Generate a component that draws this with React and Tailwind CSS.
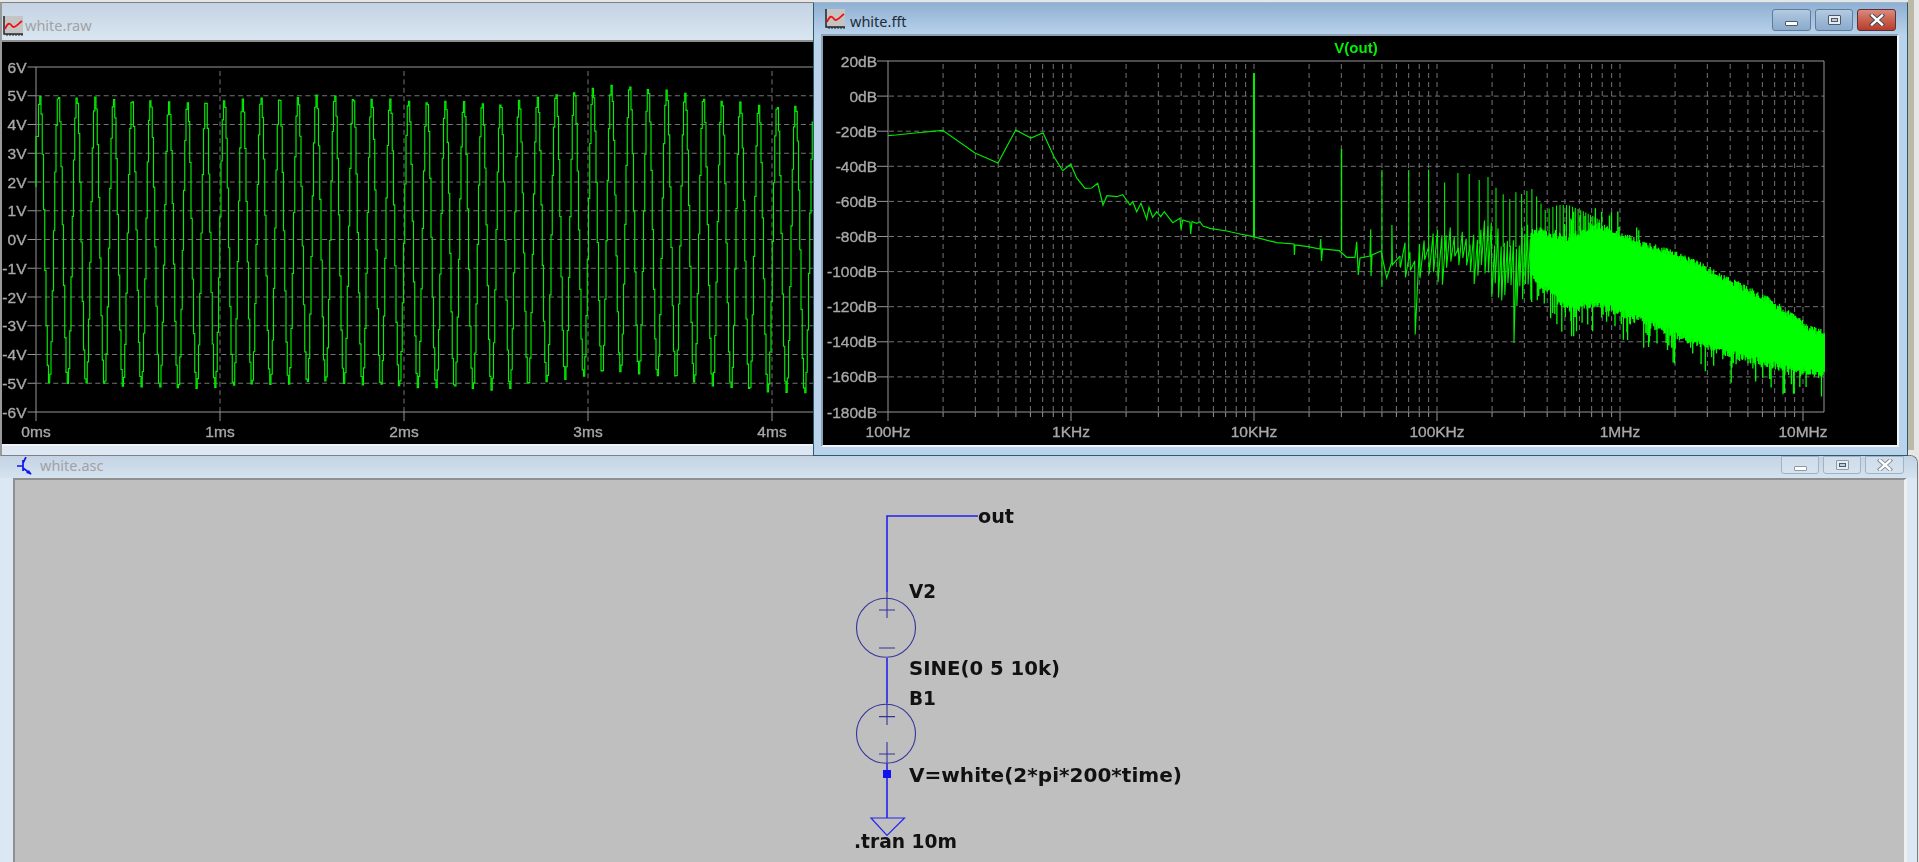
import React from 'react';

// seeded so every render gives the same noise
let seed = 12345;
const rand = () => {
  seed = (seed * 1664525 + 1013904223) % 4294967296;
  return seed / 4294967296;
};

const interp = (pts, x) => {
  if (x <= pts[0][0]) return pts[0][1];
  for (let i = 1; i < pts.length; i++) {
    if (x <= pts[i][0]) {
      const [x0, y0] = pts[i - 1];
      const [x1, y1] = pts[i];
      return y0 + ((y1 - y0) * (x - x0)) / (x1 - x0);
    }
  }
  return pts[pts.length - 1][1];
};

const GRAY = '#a8a8a8';
const GRID = '#747474';
const FRAME = '#969696';
const LABEL_FONT = "'Liberation Sans', Arial, sans-serif";

// time domain trace: 10kHz sine plus a slow wander from the white source
const peakY = [
  [39, 96], [58, 95], [77, 97], [95, 97], [113, 99], [132, 99], [150, 100], [169, 102], [187, 102],
  [205, 100], [224, 100], [242, 99], [261, 97], [279, 97], [298, 97], [316, 95], [335, 95], [353, 97],
  [372, 99], [390, 99], [410, 100], [450, 101], [500, 103], [518, 100], [537, 97], [555, 93], [573, 91],
  [592, 88], [610, 85], [629, 85], [647, 88], [666, 90], [684, 93], [702, 97], [721, 100], [739, 102],
  [758, 105], [776, 105], [795, 105], [813, 108],
];

const buildRawPath = () => {
  let d = '';
  const step = 1.25;
  for (let x = 35.5; x < 815; x += step) {
    const off = (95.75 - interp(peakY, x)) / 28.75;
    const v = 5 * Math.sin((2 * Math.PI * (x - 34.4)) / 18.43) + off;
    const y = 239.5 - v * 28.75;
    d += x === 35.5 ? `M${x} ${y.toFixed(1)}` : `V${y.toFixed(1)}H${(x + step).toFixed(2)}`;
  }
  return d;
};

// spectrum, low part read off the plot by hand
const lowTrace = [
  [888, 135.6], [896, 135], [915, 133], [942.7, 130.3], [975, 153], [998, 163], [1015.7, 130], [1031, 138],
  [1043, 132.7], [1054, 156.7], [1062.7, 170.7], [1070.7, 164.3], [1076.7, 178], [1085, 188.3], [1091.7, 188],
  [1097.7, 183.3], [1103, 205], [1107, 195.7], [1116.7, 196.7], [1122.7, 194.7], [1130, 205], [1132.7, 201.7],
  [1136.7, 211.7], [1141, 203.3], [1146.7, 219.3], [1149, 207.3], [1152.7, 217.3], [1156.7, 211.7],
  [1160.7, 216.7], [1164.3, 211.7], [1172.7, 222.7], [1180, 218.3], [1181, 229.3], [1182.7, 220], [1190, 222.3],
  [1190.7, 234], [1192, 221.5], [1196.7, 223.3], [1200, 222], [1203, 226], [1210, 228.3], [1226.7, 231],
  [1240, 234], [1253.3, 236.7], [1276.7, 242.7], [1294, 244], [1294.4, 255], [1295, 245], [1308, 246.7],
  [1320, 249], [1320.7, 239], [1321.5, 261], [1322.5, 249], [1339.3, 250.7], [1346.7, 257.3], [1355, 257.3],
  [1356.7, 241.7], [1358.3, 275], [1360, 258], [1370, 256], [1370.7, 229.3], [1371, 276], [1372, 255],
  [1381, 251], [1386.7, 278], [1391.7, 262], [1391.9, 225], [1392.4, 265], [1400, 256],
];
const toPath = (pts) => pts.map(([x, y], i) => `${i ? 'L' : 'M'}${x} ${y}`).join('');

const bandTop = [[1400, 250], [1407, 235], [1433, 225], [1460, 228], [1487, 215], [1500, 222], [1531, 222]];
const bandBot = [[1400, 285], [1407, 295], [1433, 285], [1460, 285], [1487, 295], [1500, 312], [1531, 306]];
const denseTop = [[1531, 226], [1567, 234], [1600, 222], [1633, 236], [1667, 248], [1693, 258], [1730, 277], [1770, 297], [1810, 325], [1824, 329]];
const denseBot = [[1531, 282], [1567, 312], [1600, 310], [1633, 322], [1667, 335], [1700, 349], [1733, 359], [1767, 369], [1810, 376], [1824, 380]];
const harmonicTop = [[1341, 149], [1382, 170], [1408, 170], [1428, 169], [1444, 183], [1458, 173], [1469, 174], [1479, 180], [1488, 177], [1495, 187], [1502, 193], [1509, 200], [1515, 192], [1522, 194], [1527, 191], [1532, 189], [1545, 210], [1558, 205], [1568, 205], [1585, 212], [1600, 220]];

// thin zigzag, getting denser until it merges into the solid part
const buildBand = () => {
  let d = 'M1400 256';
  let x = 1400;
  while (x < 1531) {
    const deep = rand() < 0.25 ? rand() * 60 : 0;
    const top = interp(bandTop, x) + rand() * 30;
    const bot = interp(bandBot, x) - rand() * 30 + deep;
    d += `L${x.toFixed(1)} ${top.toFixed(1)}L${(x + 0.5).toFixed(1)} ${bot.toFixed(1)}`;
    x += 5 - (x - 1400) / 55;
  }
  return d;
};

const buildDense = () => {
  let d = '';
  for (let x = 1531; x < 1825; x += 0.7) {
    const t = interp(denseTop, x) + rand() * 8 - (rand() < 0.1 && x < 1640 ? rand() * 22 : 0);
    const deep = rand() < 0.2 ? rand() * 30 : 0;
    const b = interp(denseBot, x) - rand() * 9 + deep;
    d += `M${x.toFixed(1)} ${t.toFixed(1)}V${b.toFixed(1)}`;
  }
  return d;
};

const buildHarmonics = () => {
  let d = '';
  for (let n = 5; n < 90; n += 2) {
    const x = 888 + 183 * (2 + Math.log10(n));
    if (x > 1600) break;
    const base = interp(x < 1400 ? [[1380, 262], [1400, 262]] : bandTop, x) + 25;
    d += `M${x.toFixed(1)} ${interp(harmonicTop, x).toFixed(1)}V${base.toFixed(1)}`;
  }
  return d;
};

const rawPath = buildRawPath();
const bandPath = buildBand();
const densePath = buildDense();
const harmonicPath = buildHarmonics();

const voltTicks = [6, 5, 4, 3, 2, 1, 0, -1, -2, -3, -4, -5, -6];
const msTicks = [0, 1, 2, 3, 4];
const dbTicks = [20, 0, -20, -40, -60, -80, -100, -120, -140, -160, -180];
const freqLabels = ['100Hz', '1KHz', '10KHz', '100KHz', '1MHz', '10MHz'];

const AxisText = ({ children, ...rest }) => (
  <text fontSize="15.5" fontFamily={LABEL_FONT} fill={GRAY} stroke={GRAY} strokeWidth="0.35" {...rest}>{children}</text>
);

const TimePlot = () => (
  <svg viewBox="3 42 810 402" className="block w-full h-full blur-[0.35px]">
    {voltTicks.map((v) => {
      const y = 67 + (6 - v) * 28.75;
      return (
        <g key={v}>
          <line x1="27" x2="35.5" y1={y} y2={y} stroke={FRAME} />
          {Math.abs(v) < 6 && <line x1="36" x2="813" y1={y} y2={y} stroke={GRID} strokeDasharray="5 3.4" />}
          <AxisText x="26" y={y + 5.5} textAnchor="end">{v}V</AxisText>
        </g>
      );
    })}
    {msTicks.map((m) => {
      const x = 35.5 + m * 184;
      return (
        <g key={m}>
          {m > 0 && <line x1={x} x2={x} y1="71" y2="412" stroke={GRID} strokeDasharray="5 3.4" />}
          <line x1={x} x2={x} y1="412" y2="421" stroke={FRAME} />
          <AxisText x={x} y="437" textAnchor="middle">{m}ms</AxisText>
        </g>
      );
    })}
    <path d="M813 67H35.5V412H813" fill="none" stroke={FRAME} />
    <path d={rawPath} fill="none" stroke="#00f000" strokeWidth="1.15" />
  </svg>
);

const FftPlot = () => {
  const verticals = [];
  for (let dec = 0; dec < 6; dec++) {
    for (let k = 1; k < 10; k++) {
      const x = 888 + 183 * (dec + Math.log10(k));
      if (x > 1824) break;
      if (dec === 0 && k === 1) continue;
      verticals.push([x, k === 1]);
    }
  }
  return (
    <svg viewBox="823 36 1074 409" className="block w-full h-full blur-[0.35px]">
      <text x="1356" y="53" textAnchor="middle" fontSize="15" fontWeight="700" fontFamily={LABEL_FONT} fill="#00f000">V(out)</text>
      {dbTicks.map((db, i) => {
        const y = 61 + i * 35.1;
        return (
          <g key={db}>
            <line x1="877" x2="888" y1={y} y2={y} stroke={FRAME} />
            {i > 0 && i < 10 && <line x1="889" x2="1824" y1={y} y2={y} stroke={GRID} strokeDasharray="5 3.4" />}
            <AxisText x="877" y={y + 5.5} textAnchor="end">{db}dB</AxisText>
          </g>
        );
      })}
      {verticals.map(([x, major], i) => (
        <g key={i}>
          <line x1={x} x2={x} y1="64" y2="412" stroke={GRID} strokeDasharray="5 4" />
          <line x1={x} x2={x} y1="412" y2={major ? 421 : 417} stroke={FRAME} />
        </g>
      ))}
      <line x1="888" x2="888" y1="412" y2="421" stroke={FRAME} />
      {freqLabels.map((label, i) => (
        <AxisText key={label} x={888 + i * 183} y="437" textAnchor="middle">{label}</AxisText>
      ))}
      <path d="M888 412V61H1824V412H888" fill="none" stroke={FRAME} />
      <path d={toPath(lowTrace)} fill="none" stroke="#00e800" strokeWidth="1.2" />
      <path d="M1254 237V73" stroke="#00f000" strokeWidth="2" />
      <path d="M1341.5 251V149" stroke="#00f000" strokeWidth="1.4" />
      <path d={harmonicPath} stroke="#00f000" strokeWidth="1.1" fill="none" />
      <path d={bandPath} stroke="#00f000" strokeWidth="1.1" fill="none" />
      <path d={densePath} stroke="#00ff00" strokeWidth="1.3" fill="none" />
    </svg>
  );
};

const SCHEM_FONT = "'DejaVu Sans', Verdana, sans-serif";
const labels = [
  ['out', 978, 523, 36],
  ['V2', 909, 598, 27],
  ['SINE(0 5 10k)', 909, 675, 151],
  ['B1', 909, 705, 27],
  ['V=white(2*pi*200*time)', 909, 782, 273],
  ['.tran 10m', 854, 848, 103],
];

const Schematic = () => (
  <svg viewBox="15 480 1889 382" className="block w-full h-full blur-[0.3px]">
    <g fill="none" stroke="#2222ee" strokeWidth="1.6">
      <path d="M978 516H887V592" />
      <path d="M887 658V703" />
      <path d="M887 764V818" />
    </g>
    <g fill="none" stroke="#33339c" strokeWidth="1.1">
      <circle cx="886" cy="627.7" r="29.5" />
      <circle cx="886" cy="733.7" r="29.5" />
      <path d="M887 592V618M879 610H895M879 648H895" />
      <path d="M887 703V725M879 716.6H895M887 742V764M879 754H895" />
    </g>
    <rect x="883" y="770" width="8" height="8" fill="#1010f0" />
    <path d="M871 818H904.5L887 835.5Z" fill="none" stroke="#2626f0" strokeWidth="1.2" />
    {labels.map(([text, x, y, w]) => (
      <text key={text} x={x} y={y} textLength={w} lengthAdjust="spacingAndGlyphs" fontSize="19.5" fontWeight="700" fontFamily={SCHEM_FONT} fill="#111111">{text}</text>
    ))}
  </svg>
);

const PlotIcon = () => (
  <svg viewBox="0 0 20 20" className="w-5 h-5 shrink-0">
    <rect x="1" y="0" width="19" height="17" fill="#c4c4c4" />
    <path d="M1 0V18H20" fill="none" stroke="#222" strokeWidth="1.5" />
    <path d="M4 18V20M7 18V20M10 18V20M13 18V20M16 18V20M19 18V20" stroke="#222" />
    <path d="M2 13C5 6 7 7 9 10C11 13 14 9 19 5" fill="none" stroke="#f01010" strokeWidth="1.8" />
  </svg>
);

const SchematicIcon = () => (
  <svg viewBox="0 0 15 18" className="w-[15px] h-[18px] shrink-0 mt-[1px]">
    <path d="M0 9H6M6 3V14M6 6L9 0M6 11L14 17" fill="none" stroke="#1414f0" strokeWidth="1.7" />
    <path d="M14.5 17.5L9 16L12 13Z" fill="#1414f0" />
  </svg>
);

const Glyph = ({ kind, dim }) => {
  const line = dim ? '#7f8a96' : '#3c4652';
  if (kind === 'min') {
    return <div className={`w-[13px] h-[5px] mt-[6px] rounded-[1px] border bg-white ${dim ? 'border-[#8f99a3]' : 'border-[#4d5966]'}`} />;
  }
  if (kind === 'max') {
    return (
      <div className={`w-[13px] h-[10px] rounded-[1px] border flex items-center justify-center bg-[#e6ecf2] ${dim ? 'border-[#8f99a3]' : 'border-[#4d5966]'}`}>
        <div className="w-[7px] h-[4px] border border-[#4d5966] bg-[#b9cde0]" />
      </div>
    );
  }
  return (
    <svg viewBox="0 0 16 12" className="w-4 h-3">
      <path d="M3 1.5L13 10.5M13 1.5L3 10.5" stroke={line} strokeWidth="4.2" strokeLinecap="square" />
      <path d="M3 1.5L13 10.5M13 1.5L3 10.5" stroke="#fff" strokeWidth="2.4" strokeLinecap="square" />
    </svg>
  );
};

const WinButton = ({ kind, dim, className }) => {
  const tone = dim
    ? 'bg-gradient-to-b from-[#cfdcea] to-[#d5e2ef] border-[#a3b2c2]'
    : kind === 'close'
      ? 'bg-gradient-to-b from-[#d9897e] via-[#c9604f] to-[#b83c2c] border-[#5c3038]'
      : 'bg-gradient-to-b from-[#b4cbe2] via-[#9db9d6] to-[#8aabcd] border-[#5e7b99]';
  return (
    <div className={`flex items-center justify-center border rounded-[3px] ${tone} ${className}`}>
      <Glyph kind={kind} dim={dim} />
    </div>
  );
};

const Buttons = ({ dim }) => (
  <div className="ml-auto flex gap-[4px]">
    <WinButton kind="min" dim={dim} className={dim ? 'w-[38px] h-[18px] rounded-t-none' : 'w-[39px] h-[22px]'} />
    <WinButton kind="max" dim={dim} className={dim ? 'w-[38px] h-[18px] rounded-t-none' : 'w-[38px] h-[22px]'} />
    <WinButton kind="close" dim={dim} className={dim ? 'w-[39px] h-[18px] rounded-t-none' : 'w-[39px] h-[22px]'} />
  </div>
);

export default function App() {
  return (
    <div className="relative w-[1919px] h-[862px] overflow-hidden bg-[#e6e6e6] font-['Noto_Sans',sans-serif]">
      {/* bit of the desktop left showing on the far right */}
      <div className="absolute left-[1908px] top-0 w-[6px] h-[450px] bg-[#bdb9a9]" />

      {/* schematic window, at the back */}
      <div className="absolute left-0 top-[455px] w-[1918px] h-[407px] flex flex-col border-t border-r border-[#7c7c7c] rounded-tr-lg bg-[#dbe7f3]">
        <div className="h-[22px] shrink-0 flex items-start pl-[17px] pr-[13px] rounded-tr-lg bg-gradient-to-b from-[#c3d3e3] to-[#d5e3f0]">
          <SchematicIcon />
          <span className="ml-[8px] text-[14.5px] leading-[19px] text-[#a2a2a2]">white.asc</span>
          <Buttons dim />
        </div>
        <div className="flex-1 min-h-0 flex pl-[13px] pr-[10px] bg-[#dbe7f3]">
          <div className="flex-1 min-w-0 bg-[#bfbfbf] border-t-2 border-l-2 border-[#8f8f8f] border-r-[3px] border-r-[#efefef]">
            <Schematic />
          </div>
        </div>
      </div>

      {/* inactive plot window */}
      <div className="absolute left-0 top-[2px] w-[815px] h-[454px] flex flex-col bg-[#dce7f3] border-t border-l-2 border-b border-[#808080] border-l-[#9a9a9a]">
        <div className="h-[39px] shrink-0 flex items-center pl-[1px] pt-[9px] bg-gradient-to-b from-[#c4d3e2] to-[#d9e6f2] border-b-2 border-[#8e8e8e]">
          <PlotIcon />
          <span className="ml-[2px] text-[14.5px] text-[#a2a2a2]">white.raw</span>
        </div>
        <div className="h-[402px] shrink-0 bg-black">
          <TimePlot />
        </div>
        <div className="flex-1 border-t-2 border-[#eef3f8]" />
      </div>

      {/* active plot window */}
      <div className="absolute left-[813px] top-[2px] w-[1095px] h-[454px] flex flex-col bg-[#b9d3ec] border border-[#2d5a66] border-t-[#9db8d2]">
        <div className="h-[31px] shrink-0 flex items-start pl-[11px] pr-[11px] pt-[6px] bg-gradient-to-b from-[#8fb0d2] to-[#b8d1ea]">
          <PlotIcon />
          <span className="ml-[5px] text-[14.5px] leading-[24px] text-[#1e2c3a]">white.fft</span>
          <Buttons />
        </div>
        <div className="flex-1 min-h-0 flex pl-[7px] pr-[8px] pb-[8px]">
          <div className="flex-1 min-w-0 bg-black border-r-2 border-b-2 border-[#f0f5fa] border-t-2 border-t-[#8ea2b6] border-l-2 border-l-[#8ea2b6]">
            <FftPlot />
          </div>
        </div>
      </div>
    </div>
  );
}
